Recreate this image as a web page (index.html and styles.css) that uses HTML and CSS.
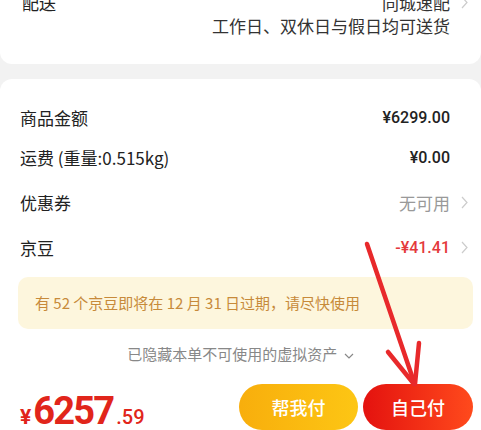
FILE: index.html
```html
<!DOCTYPE html>
<html lang="zh-CN">
<head>
    <meta charset="UTF-8">
    <meta name="viewport" content="width=device-width, initial-scale=1.0">
    <title>确认订单</title>
    <link rel="stylesheet" href="styles.css">
</head>
<body>
    <div class="page">
      <div class="card delivery">
        <div class="delivery-row">
          <span class="label">配送</span>
          <span class="value muted-dark">同城速配</span>
          <span class="chev"><svg width="7" height="13" viewBox="0 0 7 13"><polyline points="1,1 6,6.5 1,12"/></svg></span>
        </div>
        <div class="delivery-note">工作日、双休日与假日均可送货</div>
      </div>

      <div class="card summary">
        <div class="row">
          <span class="label">商品金额</span>
          <span class="value num">¥6299.00</span>
          <span class="chev"></span>
        </div>
        <div class="row">
          <span class="label">运费 (重量:0.515kg)</span>
          <span class="value num">¥0.00</span>
          <span class="chev"></span>
        </div>
        <div class="row coupon">
          <span class="label">优惠券</span>
          <span class="value muted">无可用</span>
          <span class="chev"><svg width="7" height="13" viewBox="0 0 7 13"><polyline points="1,1 6,6.5 1,12"/></svg></span>
        </div>
        <div class="row">
          <span class="label">京豆</span>
          <span class="value num red">-¥41.41</span>
          <span class="chev"><svg width="7" height="13" viewBox="0 0 7 13"><polyline points="1,1 6,6.5 1,12"/></svg></span>
        </div>

        <div class="notice">有 52 个京豆即将在 12 月 31 日过期，请尽快使用</div>

        <div class="hidden-assets">已隐藏本单不可使用的虚拟资产 <span class="down"><svg width="10" height="6" viewBox="0 0 10 6"><polyline points="1,1 5,5 9,1"/></svg></span></div>

        <div class="paybar">
          <div class="total">
            <span class="yen">¥</span><span class="int">6257</span><span class="dec">.59</span>
          </div>
          <div class="buttons">
            <button class="btn btn-help">帮我付</button>
            <button class="btn btn-self">自己付</button>
          </div>
        </div>
      </div>

      <!-- 标注箭头 -->
      <svg class="arrow" width="481" height="430" viewBox="0 0 481 430">
        <g stroke="#e8292b" stroke-width="4.5" stroke-linecap="round" fill="none">
          <line x1="367" y1="244" x2="414" y2="382"/>
          <line x1="388" y1="352" x2="414" y2="384"/>
          <line x1="419" y1="343" x2="415" y2="384"/>
        </g>
      </svg>
    </div>
</body>
</html>
```

FILE: styles.css
```css
body {
    margin: 0;
    background-color: #f2f2f2;
    font-family: "Noto Sans CJK SC", "Noto Sans", sans-serif;
    color: #222;
}
.page {
    position: relative;
    height: 430px;
    overflow: hidden;
}
.card {
    background-color: #fff;
}
.delivery {
    margin-top: -10px;
    padding: 0 6px 26px 22px;
    border-radius: 0 0 12px 12px;
}
.delivery-row {
    display: flex;
    align-items: center;
    height: 24px;
    font-size: 17px;
}
.delivery-row .label {
    flex: 1;
}
.delivery-note {
    font-size: 17px;
    line-height: 24px;
    text-align: right;
    padding-right: 25px;
    color: #333;
}
.summary {
    margin-top: 15px;
    padding-top: 18px;
    border-radius: 12px 12px 0 0;
    height: 400px;
}
.row {
    display: flex;
    align-items: center;
    height: 40px;
    padding: 0 6px 0 20px;
    font-size: 17px;
}
.row.coupon {
    height: 50px;
}
.row .label {
    flex: 1;
}
.value {
    font-size: 17px;
}
.num {
    font-family: Roboto, "Noto Sans", sans-serif;
    font-weight: 500;
    font-size: 16px;
}
.muted {
    color: #999;
}
.muted-dark {
    color: #333;
}
.red {
    color: #e4393c;
}
.chev {
    width: 22px;
    margin-left: 3px;
    display: flex;
    justify-content: center;
}
.chev svg, .down svg {
    fill: none;
    stroke: #ccc;
    stroke-width: 1.2;
}
.notice {
    margin: 10px 8px 0 18px;
    height: 52px;
    line-height: 52px;
    padding-left: 17px;
    background-color: #fdf6dd;
    border-radius: 10px;
    color: #c78a3a;
    font-size: 15px;
}
.hidden-assets {
    margin-top: 15px;
    text-align: center;
    font-size: 15px;
    line-height: 20px;
    color: #888;
}
.down {
    margin-left: 3px;
}
.down svg {
    stroke: #888;
    vertical-align: middle;
}
.paybar {
    display: flex;
    align-items: center;
    justify-content: space-between;
    margin-top: 17px;
    padding: 0 8px 0 20px;
}
.total {
    color: #e1251b;
    font-family: Roboto, "Noto Sans", sans-serif;
    font-weight: 700;
    padding-top: 8px;
}
.total .yen {
    font-size: 21px;
    margin-right: 2px;
}
.total .int {
    font-size: 38px;
    letter-spacing: -1.8px;
}
.total .dec {
    font-size: 20px;
    font-weight: 500;
    margin-left: 3px;
}
.buttons {
    display: flex;
    gap: 5px;
}
.btn {
    height: 46px;
    border: none;
    border-radius: 23px;
    color: #fff;
    font-family: "Noto Sans CJK SC", sans-serif;
    font-size: 18px;
    font-weight: 500;
}
.btn-help {
    width: 119px;
    background: linear-gradient(90deg, #f8ae0c, #fdc614);
}
.btn-self {
    width: 110px;
    background: linear-gradient(90deg, #e4120f, #ff4a1c);
}
.arrow {
    position: absolute;
    top: 0;
    left: 0;
    pointer-events: none;
}
```
